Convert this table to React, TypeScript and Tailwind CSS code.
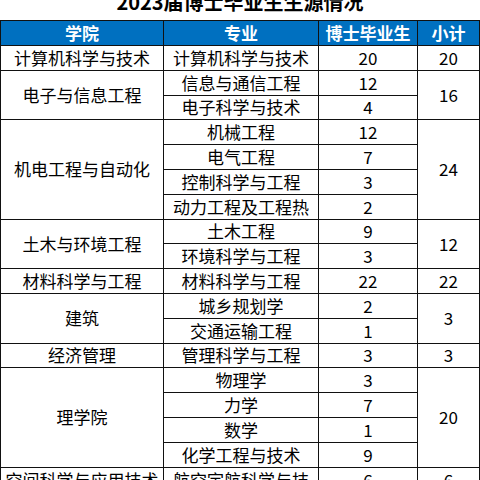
const GROUPS = [
  { xueyuan: "计算机科学与技术", total: 20, rows: [["计算机科学与技术", 20]] },
  { xueyuan: "电子与信息工程", total: 16, rows: [["信息与通信工程", 12], ["电子科学与技术", 4]] },
  {
    xueyuan: "机电工程与自动化",
    total: 24,
    rows: [["机械工程", 12], ["电气工程", 7], ["控制科学与工程", 3], ["动力工程及工程热", 2]],
  },
  { xueyuan: "土木与环境工程", total: 12, rows: [["土木工程", 9], ["环境科学与工程", 3]] },
  { xueyuan: "材料科学与工程", total: 22, rows: [["材料科学与工程", 22]] },
  { xueyuan: "建筑", total: 3, rows: [["城乡规划学", 2], ["交通运输工程", 1]] },
  { xueyuan: "经济管理", total: 3, rows: [["管理科学与工程", 3]] },
  { xueyuan: "理学院", total: 20, rows: [["物理学", 3], ["力学", 7], ["数学", 1], ["化学工程与技术", 9]] },
] as const;

const cell = "border border-[#111] text-center align-middle p-0 whitespace-nowrap";

export default function App() {
  return (
    <div
      className="w-[480px] h-[480px] overflow-hidden bg-white text-black"
      style={{ fontFamily: '"Noto Sans CJK SC", "Noto Sans", sans-serif' }}
    >
      <div className="h-[20px] leading-[20px] -mt-[8px] mb-[8px] text-center text-[20px] font-bold">
        2023届博士毕业生生源情况
      </div>

      <table className="table-fixed border-collapse w-[479px] text-[17px] leading-[20px]">
        <colgroup>
          <col className="w-[163px]" />
          <col className="w-[155px]" />
          <col className="w-[99px]" />
          <col className="w-[62px]" />
        </colgroup>
        <thead>
          <tr className="h-[25px] bg-[#0070c0] text-white font-bold">
            <th className={cell}>学院</th>
            <th className={cell}>专业</th>
            <th className={cell}>博士毕业生</th>
            <th className={cell}>小计</th>
          </tr>
        </thead>
        <tbody>
          {GROUPS.map((g) =>
            g.rows.map(([zhuanye, n], i) => (
              <tr key={g.xueyuan + zhuanye} className="h-[24.8px]">
                {i === 0 && (
                  <td className={cell} rowSpan={g.rows.length}>
                    {g.xueyuan}
                  </td>
                )}
                <td className={cell}>{zhuanye}</td>
                <td className={cell}>{n}</td>
                {i === 0 && (
                  <td className={cell} rowSpan={g.rows.length}>
                    {g.total}
                  </td>
                )}
              </tr>
            ))
          )}
          <tr className="h-[24.8px]">
            <td className={cell + " !align-top pt-[2px]"}>空间科学与应用技术</td>
            <td className={cell + " !align-top pt-[2px]"}>航空宇航科学与技</td>
            <td className={cell + " !align-top pt-[2px]"}>6</td>
            <td className={cell + " !align-top pt-[2px]"}>6</td>
          </tr>
        </tbody>
      </table>
    </div>
  );
}
